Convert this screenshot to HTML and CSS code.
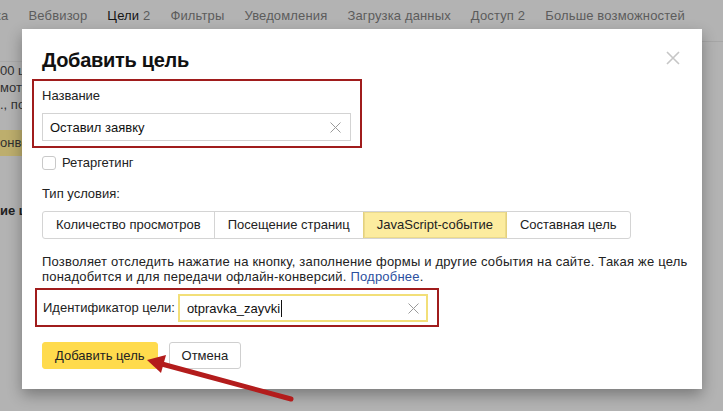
FILE: index.html
```html
<!DOCTYPE html>
<html lang="ru">
<head>
<meta charset="utf-8">
<title>Добавить цель</title>
<link rel="stylesheet" href="styles.css">
</head>
<body>
<div class="page">
  <nav class="topnav">
    <span class="nav-item cut">ка</span>
    <span class="nav-item">Вебвизор</span>
    <span class="nav-item active">Цели <span class="cnt">2</span></span>
    <span class="nav-item">Фильтры</span>
    <span class="nav-item">Уведомления</span>
    <span class="nav-item">Загрузка данных</span>
    <span class="nav-item">Доступ <span class="cnt">2</span></span>
    <span class="nav-item">Больше возможностей</span>
  </nav>
  <div class="bg-content">
    <div class="bg-sep"></div>
    <p class="bg-text">00 целей</p>
    <p class="bg-text">мотров</p>
    <p class="bg-text">., по</p>
    <div class="bg-btn">онвертировать</div>
    <p class="bg-bold">ие цели</p>
  </div>
  <div class="bg-right-line"></div>
</div>

<div class="modal">
  <button class="close" aria-label="Закрыть">
    <svg width="14" height="14" viewBox="0 0 14 14"><path d="M1 1 L13 13 M13 1 L1 13" stroke="#c6c6c6" stroke-width="1.6" fill="none"/></svg>
  </button>
  <h1 class="title">Добавить цель</h1>

  <div class="mark mark-name">
    <div class="label">Название</div>
    <div class="input input-name">
      <span class="value">Оставил заявку</span>
      <svg class="clear" width="11" height="11" viewBox="0 0 11 11"><path d="M0.5 0.5 L10.5 10.5 M10.5 0.5 L0.5 10.5" stroke="#9a9a9a" stroke-width="1" fill="none"/></svg>
    </div>
  </div>

  <label class="check-row">
    <span class="checkbox"></span>
    <span>Ретаргетинг</span>
  </label>

  <div class="label type-label">Тип условия:</div>
  <div class="segmented">
    <span class="seg">Количество просмотров</span>
    <span class="seg">Посещение страниц</span>
    <span class="seg selected">JavaScript-событие</span>
    <span class="seg">Составная цель</span>
  </div>

  <p class="desc">Позволяет отследить нажатие на кнопку, заполнение формы и другие события на сайте. Такая же цель понадобится и для передачи офлайн-конверсий. <a href="#" class="link">Подробнее</a>.</p>

  <div class="mark mark-id">
    <span class="label id-label">Идентификатор цели:</span>
    <div class="input input-id">
      <span class="value">otpravka_zayvki</span><span class="caret"></span>
      <svg class="clear" width="11" height="11" viewBox="0 0 11 11"><path d="M0.5 0.5 L10.5 10.5 M10.5 0.5 L0.5 10.5" stroke="#9a9a9a" stroke-width="1" fill="none"/></svg>
    </div>
  </div>

  <div class="actions">
    <button class="btn btn-primary">Добавить цель</button>
    <button class="btn">Отмена</button>
  </div>
</div>

<svg class="arrow" width="723" height="411" viewBox="0 0 723 411">
  <line x1="291" y1="399" x2="160" y2="363.5" stroke="#b31c1c" stroke-width="5" stroke-linecap="round"/>
  <polygon points="147,360 166,355 161,373" fill="#b31c1c"/>
</svg>
</body>
</html>
```

FILE: styles.css
```css
* { box-sizing: border-box; }

html, body {
  margin: 0;
  padding: 0;
}

body {
  width: 723px;
  height: 411px;
  overflow: hidden;
  position: relative;
  background: #b3b3b3;
  font-family: "Liberation Sans", Arial, sans-serif;
  font-size: 13px;
  color: #222;
}

.page {
  height: 411px;
}

.topnav {
  display: flex;
  gap: 20px;
  height: 29px;
  align-items: center;
  padding-top: 2px;
  white-space: nowrap;
  letter-spacing: 0.15px;
}

.nav-item {
  color: #5c5c5c;
  font-size: 13px;
}

.nav-item.cut {
  margin-left: -5px;
}

.nav-item.active {
  color: #141414;
}

.nav-item .cnt {
  color: #5c5c5c;
}

.bg-content {
  width: 120px;
}

.bg-sep {
  height: 1px;
  background: #a9a9a9;
  margin-top: 32px;
}

.bg-text {
  margin: 0;
  color: #303030;
  line-height: 17px;
  font-size: 13px;
  white-space: nowrap;
}

.bg-btn {
  margin-top: 17px;
  height: 26px;
  line-height: 26px;
  background: #bdae6d;
  color: #303030;
  white-space: nowrap;
}

.bg-bold {
  margin: 47px 0 0;
  font-weight: bold;
  color: #202020;
  white-space: nowrap;
  line-height: 16px;
}

.bg-right-line {
  position: absolute;
  left: 702px;
  top: 41px;
  width: 21px;
  height: 1px;
  background: #a6a6a6;
}

/* Modal lies over the dimmed page */
.modal {
  position: absolute;
  left: 22px;
  top: 29px;
  width: 680px;
  height: 360px;
  background: #fff;
  padding: 0 20px;
  box-shadow: 0 6px 14px rgba(0, 0, 0, 0.32);
}

.close {
  position: absolute;
  right: 22px;
  top: 22px;
  width: 14px;
  height: 14px;
  padding: 0;
  border: 0;
  background: none;
  display: block;
}

.close svg { display: block; }

.title {
  margin: 19px 0 0;
  font-size: 20px;
  line-height: 24px;
  font-weight: bold;
  color: #111;
  letter-spacing: -0.3px;
}

.label {
  line-height: 16px;
  color: #222;
}

.mark {
  border: 2px solid #a01c1c;
}

.mark-name {
  width: 330px;
  margin: 7px 0 0 -10px;
  padding: 7px 9px 5px 8px;
}

.input {
  position: relative;
  display: flex;
  align-items: center;
  height: 28px;
  background: #fff;
}

.input-name {
  margin-top: 9px;
  width: 309px;
  border: 1px solid #d3d3d3;
  padding-left: 7px;
}

.input .value {
  color: #111;
}

.input .clear {
  position: absolute;
  top: 50%;
  margin-top: -5.5px;
}

.input-name .clear {
  right: 9px;
}

.check-row {
  display: flex;
  align-items: center;
  gap: 6px;
  margin-top: 8px;
  height: 14px;
  line-height: 14px;
}

.checkbox {
  width: 14px;
  height: 14px;
  border: 1px solid #c9c9c9;
  border-radius: 3px;
  background: #fff;
}

.type-label {
  margin-top: 16px;
}

.segmented {
  display: flex;
  margin-top: 9px;
  width: max-content;
  border: 1px solid #d4d4d4;
  border-radius: 3px;
  overflow: hidden;
}

.seg {
  height: 26px;
  line-height: 26px;
  padding: 0 13px;
  border-left: 1px solid #d4d4d4;
  color: #222;
  white-space: nowrap;
}

.seg:first-child {
  border-left: 0;
}

.seg.selected {
  background: #fcec9f;
  border-left-color: #e4d17e;
  box-shadow: inset 0 0 0 1px #ecdb8c;
}

.seg.selected + .seg {
  border-left-color: #e4d17e;
}

.desc {
  margin: 15px 0 0;
  line-height: 15px;
  width: 660px;
  color: #222;
  letter-spacing: 0.2px;
}

.link {
  color: #2c4f9e;
  text-decoration: none;
}

.mark-id {
  display: flex;
  align-items: center;
  gap: 3px;
  width: 404px;
  margin: 4px 0 0 -7px;
  padding: 4px 9px 3px 6px;
}

.id-label {
  white-space: nowrap;
  flex-shrink: 0;
}

.input-id {
  flex: 0 0 250px;
  width: 250px;
  border: 2px solid #f2df79;
  padding-left: 7px;
}

.caret {
  display: inline-block;
  width: 1px;
  height: 17px;
  background: #111;
  margin-left: 1px;
}

.input-id .clear {
  right: 7px;
}

.actions {
  display: flex;
  gap: 11px;
  margin-top: 15px;
}

.btn {
  height: 27px;
  padding: 0 12px;
  border: 1px solid #cfcfcf;
  border-radius: 3px;
  background: #fff;
  font-family: "Liberation Sans", Arial, sans-serif;
  font-size: 13px;
  color: #222;
}

.btn-primary {
  background: #ffdb4d;
  border-color: #ffdb4d;
}

.arrow {
  position: absolute;
  left: 0;
  top: 0;
  pointer-events: none;
}
```
